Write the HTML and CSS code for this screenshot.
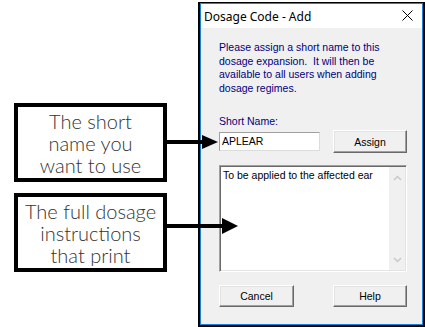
FILE: index.html
```html
<!DOCTYPE html>
<html lang="en">
<head>
    <meta charset="UTF-8">
    <title>Dosage Code - Add</title>
    <link rel="stylesheet" href="styles.css">
</head>
<body>
    <div class="page">
        <div class="callouts">
            <div class="callout">The short<br>name you<br>want to use</div>
            <div class="callout">The full dosage<br>instructions<br>that print</div>
        </div>
        <div class="dialog">
            <div class="frame">
                <div class="titlebar">
                    <span>Dosage Code - Add</span>
                    <svg class="close" width="11" height="11" viewBox="0 0 11 11">
                        <path d="M0.5 0.5 L10.5 10.5 M10.5 0.5 L0.5 10.5" stroke="#000" stroke-width="1" fill="none"/>
                    </svg>
                </div>
                <div class="content">
                    <p class="intro">Please assign a short name to this<br>dosage expansion.&nbsp; It will then be<br>available to all users when adding<br>dosage regimes.</p>
                    <div class="label">Short Name:</div>
                    <div class="row">
                        <div class="field">APLEAR</div>
                        <div class="btn">Assign</div>
                    </div>
                    <div class="memo">
                        <div class="memo-text">To be applied to the affected ear</div>
                        <div class="scroll">
                            <svg width="9" height="6" viewBox="0 0 9 6"><path d="M1 5 L4.5 1.5 L8 5" stroke="#c8c8c8" stroke-width="1.5" fill="none"/></svg>
                            <svg width="9" height="6" viewBox="0 0 9 6"><path d="M1 1 L4.5 4.5 L8 1" stroke="#c8c8c8" stroke-width="1.5" fill="none"/></svg>
                        </div>
                    </div>
                    <div class="buttons">
                        <div class="btn btn-cancel">Cancel</div>
                        <div class="btn">Help</div>
                    </div>
                </div>
            </div>
        </div>
        <!-- pointers from the notes into the dialog -->
        <svg class="arrows" width="425" height="327" viewBox="0 0 425 327">
            <rect x="167" y="140" width="36" height="4" fill="#000"/>
            <polygon points="202,135 218,142 202,149" fill="#000"/>
            <rect x="167" y="224" width="56" height="4" fill="#000"/>
            <polygon points="222,218 238,226 222,234" fill="#000"/>
        </svg>
    </div>
</body>
</html>
```
FILE: styles.css
```css
body {
    margin: 0;
    background-color: #ffffff;
}
.page {
    position: relative;
    display: flex;
    width: 425px;
    height: 327px;
    overflow: hidden;
}
.callouts {
    width: 198px;
    padding: 103px 0 0 14px;
    box-sizing: border-box;
    display: flex;
    flex-direction: column;
    gap: 11px;
}
.callout {
    width: 153px;
    height: 79px;
    border: 4px solid #000;
    box-sizing: border-box;
    display: flex;
    align-items: center;
    justify-content: center;
    text-align: center;
    font-family: Lato, "Noto Sans", sans-serif;
    font-weight: 300;
    font-size: 20px;
    line-height: 22px;
    color: #333333;
    padding-top: 1px;
}
.dialog {
    width: 227px;
    height: 325px;
    margin-top: 2px;
    border: 2px solid #000;
    border-top-width: 1px;
    box-sizing: border-box;
}
.frame {
    height: 100%;
    border: 1px solid #1883d7;
    box-sizing: border-box;
    display: flex;
    flex-direction: column;
}
.titlebar {
    height: 24px;
    background-color: #ffffff;
    display: flex;
    align-items: center;
    justify-content: space-between;
    padding: 0 9px 0 3px;
    font-family: "Noto Sans", sans-serif;
    font-size: 12px;
    color: #000;
}
.close {
    margin-top: -1px;
}
.content {
    flex: 1;
    background-color: #f0f0f0;
    padding: 13px 15px 0 18px;
    font-family: "Liberation Sans", Arial, sans-serif;
    font-size: 10.5px;
    color: #000;
}
.intro {
    margin: 0;
    color: #000080;
    line-height: 13.5px;
}
.label {
    margin-top: 20px;
    color: #000080;
    line-height: 13px;
}
.row {
    margin-top: 2px;
    display: flex;
    align-items: center;
    gap: 13px;
}
.field {
    width: 101px;
    height: 19px;
    box-sizing: border-box;
    background-color: #ffffff;
    border: 1px solid;
    border-color: #a0a0a0 #dcdcdc #dcdcdc #a0a0a0;
    padding: 0 2px;
    line-height: 17px;
}
.btn {
    width: 74px;
    height: 23px;
    box-sizing: border-box;
    background-color: #f0f0f0;
    border: 1px solid;
    border-color: #ffffff #696969 #696969 #ffffff;
    box-shadow: inset -1px -1px #a0a0a0, inset 1px 1px #e3e3e3;
    display: flex;
    align-items: center;
    justify-content: center;
}
.memo {
    margin-top: 12px;
    height: 107px;
    box-sizing: border-box;
    display: flex;
    background-color: #ffffff;
    border: 1px solid;
    border-color: #a0a0a0 #ffffff #ffffff #a0a0a0;
    box-shadow: inset 1px 1px #696969, inset -1px -1px #e3e3e3;
}
.memo-text {
    flex: 1;
    padding: 3px 0 0 3px;
}
.scroll {
    width: 16px;
    margin: 1px 1px 1px 0;
    background-color: #f0f0f0;
    display: flex;
    flex-direction: column;
    justify-content: space-between;
    align-items: center;
    padding: 8px 0 7px;
}
.buttons {
    margin-top: 13px;
    display: flex;
    justify-content: space-between;
}
.buttons .btn {
    height: 22px;
}
.btn-cancel {
    width: 75px;
}
.arrows {
    position: absolute;
    top: 0;
    left: 0;
    pointer-events: none;
}
```
